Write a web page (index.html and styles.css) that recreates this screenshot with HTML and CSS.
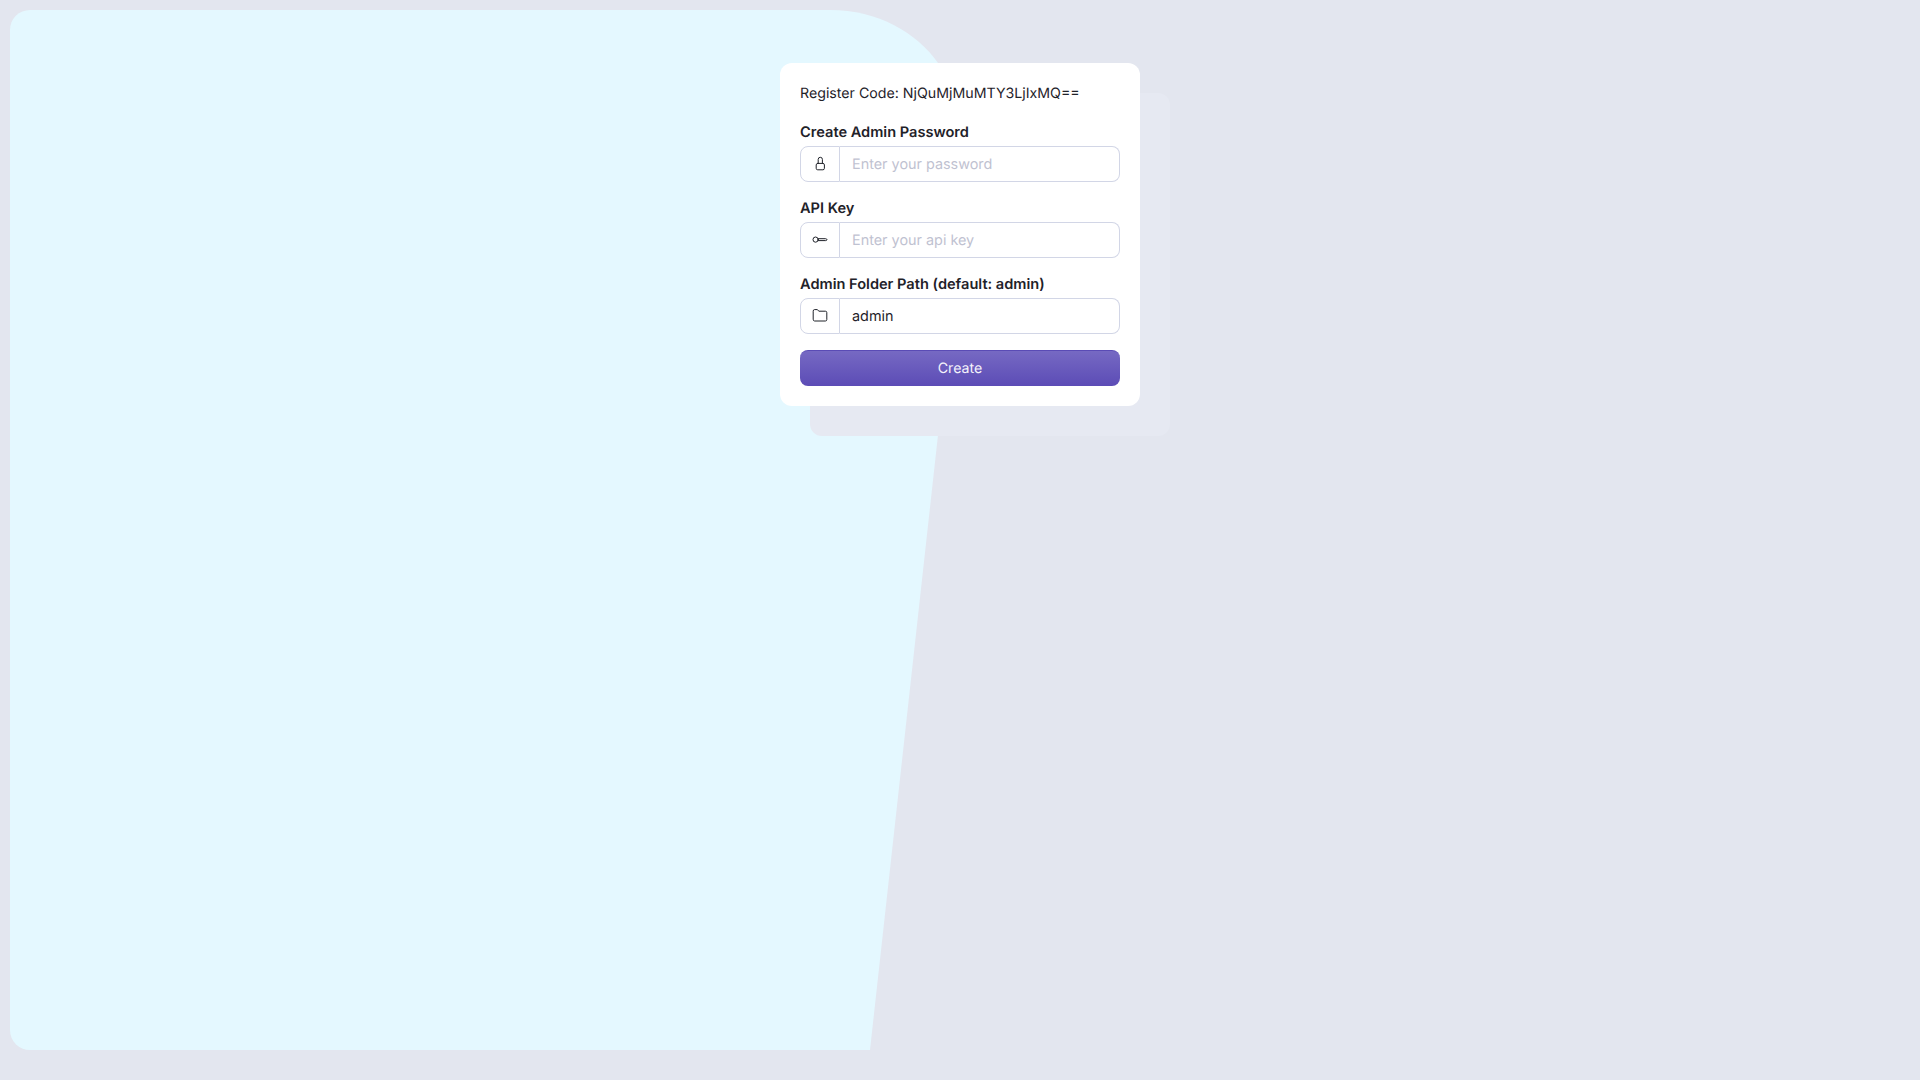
FILE: index.html
```html
<!DOCTYPE html>
<html lang="en">
<head>
<meta charset="utf-8">
<title>Register</title>
<link rel="stylesheet" href="styles.css">
</head>
<body>
<svg class="backdrop" width="1920" height="1080" viewBox="0 0 1920 1080" aria-hidden="true">
  <path class="backdrop-shape" d="M10 30 A20 20 0 0 1 30 10 H830 C878 10 917 33 938 63 L964 200 L870 1050 H30 A20 20 0 0 1 10 1030 Z"/>
</svg>
<main class="stage">
  <div class="card-wrap">
    <form class="card">
      <p class="code">Register Code: NjQuMjMuMTY3LjIxMQ==</p>
      <div class="field">
        <label class="label">Create Admin Password</label>
        <div class="group">
          <span class="addon">
            <svg class="icon" width="16" height="16" viewBox="0 0 16 16"><rect x="4.2" y="7.4" width="8.2" height="6.4" rx="1.5"/><path d="M6.2 7.4V3.4a2.1 2.1 0 0 1 4.2 0V7.4"/></svg>
          </span>
          <input class="input" type="text" placeholder="Enter your password">
        </div>
      </div>
      <div class="field">
        <label class="label">API Key</label>
        <div class="group">
          <span class="addon">
            <svg class="icon" width="16" height="16" viewBox="0 0 16 16"><circle cx="3.6" cy="7.6" r="2.6"/><path d="M6.2 6.7H13.6C15.4 6.7 15.4 8.6 13.6 8.6H6.2"/></svg>
          </span>
          <input class="input" type="text" placeholder="Enter your api key">
        </div>
      </div>
      <div class="field">
        <label class="label">Admin Folder Path (default: admin)</label>
        <div class="group">
          <span class="addon">
            <svg class="icon" width="16" height="16" viewBox="0 0 16 16"><path d="M1.2 2.8A1.2 1.2 0 0 1 2.4 1.6H5.4L6.8 3.2H13.4A1.4 1.4 0 0 1 14.8 4.6V11.6A1.4 1.4 0 0 1 13.4 13H2.6A1.4 1.4 0 0 1 1.2 11.6Z"/></svg>
          </span>
          <input class="input" type="text" value="admin">
        </div>
      </div>
      <button class="submit" type="button">Create</button>
    </form>
  </div>
</main>
</body>
</html>
```
FILE: styles.css
```css
* { box-sizing: border-box; }
html, body { margin: 0; height: 100%; }
body {
  background: #e3e6ef;
  font-family: Inter, "Liberation Sans", sans-serif;
  color: #1f2229;
  overflow: hidden;
  position: relative;
  text-rendering: geometricPrecision;
}
.backdrop { position: absolute; left: 0; top: 0; display: block; }
.backdrop-shape { fill: #e4f8ff; }
.stage { position: relative; display: flex; justify-content: center; padding-top: 63px; }
.card-wrap { position: relative; width: 360px; }
.card-wrap::before {
  content: "";
  position: absolute;
  left: 30px;
  top: 30px;
  width: 100%;
  height: 100%;
  background: #e6e9f2;
  border-radius: 12px;
}
.card {
  position: relative;
  background: #fff;
  border-radius: 12px;
  padding: 21px 20px 19px;
  height: 343px;
}
.code { margin: 0 0 18px; font-size: 14.2px; line-height: 20px; }
.field { margin-bottom: 16px; }
.label { display: block; font-size: 14.6px; font-weight: 600; line-height: 20px; margin-bottom: 4px; }
.group { display: flex; height: 36px; }
.addon {
  width: 40px;
  flex: none;
  display: flex;
  align-items: center;
  justify-content: center;
  border: 1px solid #d2d6e6;
  border-radius: 8px 0 0 8px;
  background: #fff;
}
.icon { display: block; fill: none; stroke: #1f2229; stroke-width: 1; stroke-linejoin: round; stroke-linecap: round; }
.input {
  flex: 1;
  min-width: 0;
  border: 1px solid #d2d6e6;
  border-left: 0;
  border-radius: 0 8px 8px 0;
  padding: 0 12px;
  font: 400 14.4px Inter, "Liberation Sans", sans-serif;
  text-rendering: geometricPrecision;
  color: #1f2229;
  background: #fff;
  outline: 0;
}
.input::placeholder { color: #bfc2d1; opacity: 1; }
.submit {
  display: block;
  width: 100%;
  height: 36px;
  border: 0;
  border-top: 1px solid #5a4bb5;
  border-radius: 8px;
  background: linear-gradient(#7669c3, #5c4cb6);
  color: #f4f2fb;
  font: 400 14.2px Inter, "Liberation Sans", sans-serif;
  text-rendering: geometricPrecision;
}
```
